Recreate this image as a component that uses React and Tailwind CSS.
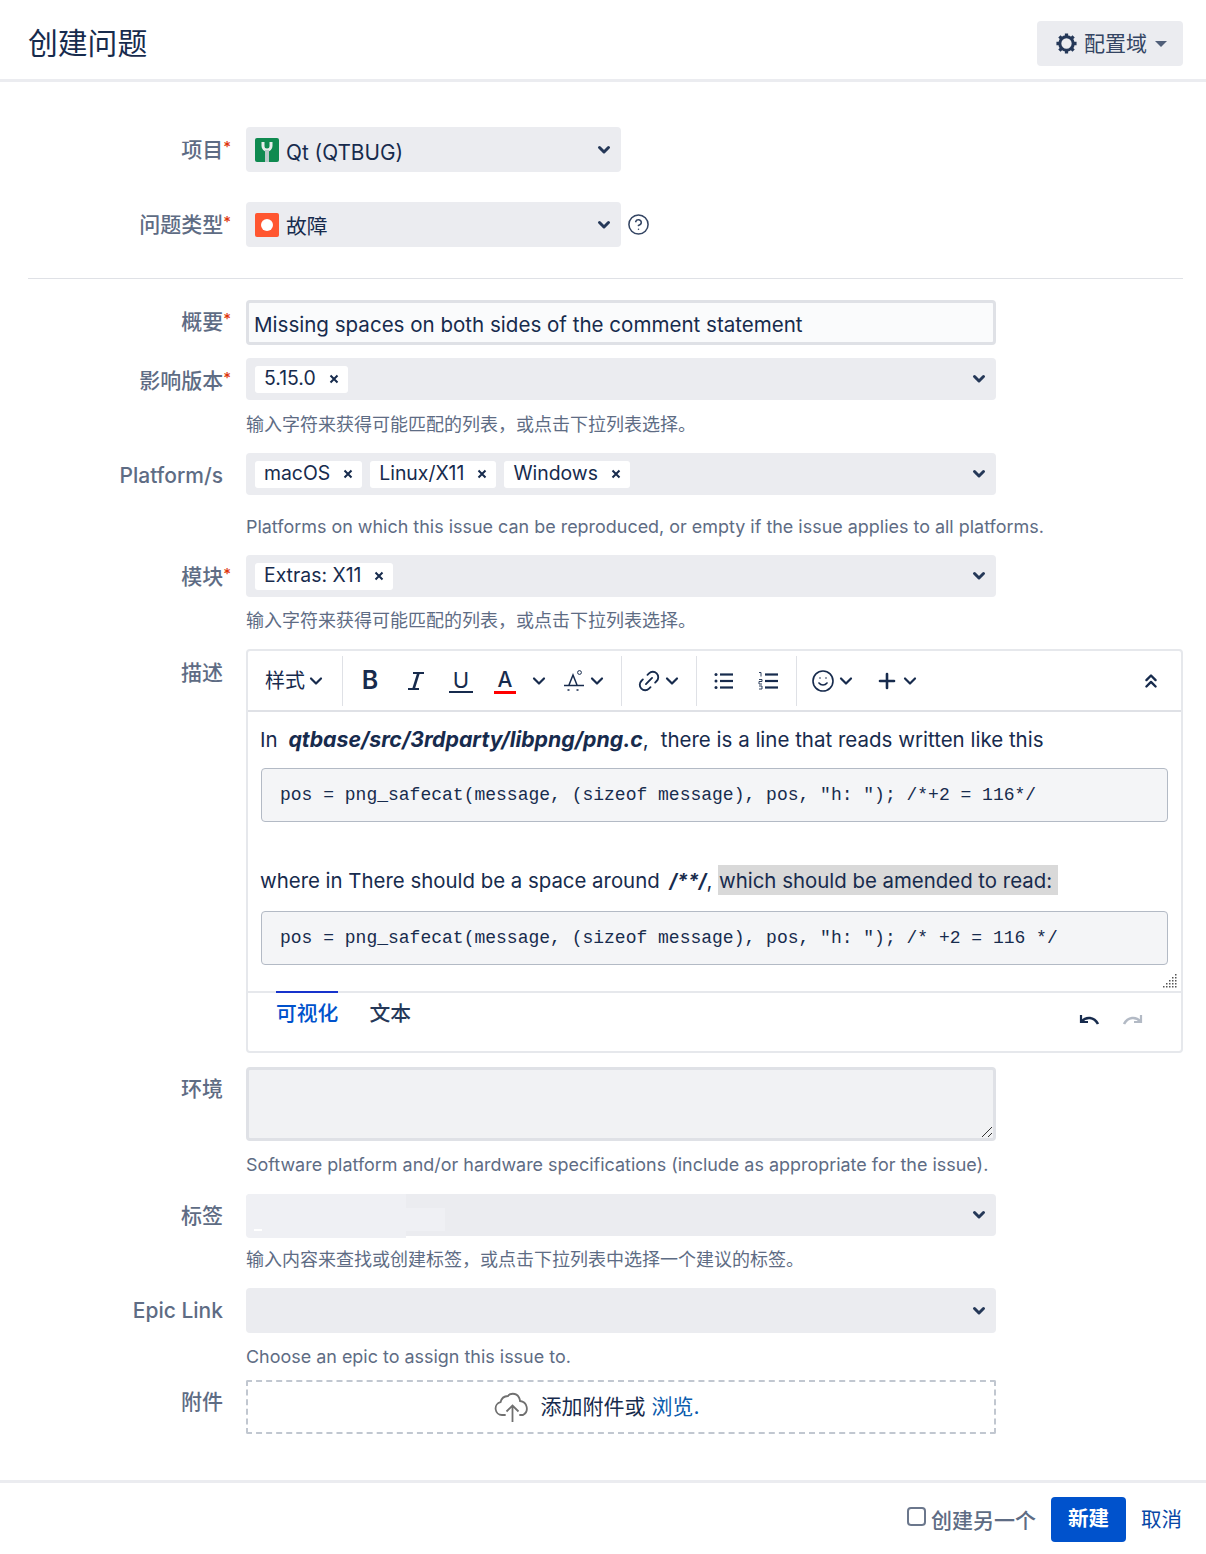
import React from "react";
import { ChevronsUp, Plus, Smile, Link2, HelpCircle } from "lucide-react";

const font = { fontFamily: '"Inter", "Noto Sans CJK SC", sans-serif' };

const Chevron = ({ className = "" }) => (
  <svg width="14" height="10" viewBox="0 0 14 10" fill="none" className={className}>
    <path d="M2.5 2.5 7 7l4.5-4.5" stroke="#253858" strokeWidth="3" strokeLinecap="round" strokeLinejoin="round" />
  </svg>
);

const SmallChevron = ({ className = "" }) => (
  <svg width="14" height="10" viewBox="0 0 14 10" fill="none" className={className}>
    <path d="M2 2.5 7 7.5l5-5" stroke="#172b4d" strokeWidth="2.2" strokeLinecap="round" strokeLinejoin="round" />
  </svg>
);

const Label = ({ text, required, className = "" }) => (
  <div className={`w-[231px] shrink-0 text-right text-[21px] font-medium leading-[28px] text-[#5e6c84] ${className}`}>
    {text}
    {required ? (
      <span className="relative -top-[5px] text-[15px] text-[#de350b]">*</span>
    ) : (
      <span className="inline-block w-2" />
    )}
  </div>
);

const Row = ({ label, required, labelClass, className = "", children }) => (
  <div className={`flex gap-[15px] ${className}`}>
    <Label text={label} required={required} className={labelClass} />
    <div className="min-w-0 flex-1">{children}</div>
  </div>
);

const Help = ({ children, className = "text-[17.96px]" }) => (
  <div className={`leading-[24px] text-[#5e6c84] ${className}`}>{children}</div>
);

const Tag = ({ text }) => (
  <span className="flex h-[27px] items-center rounded-[3px] bg-white pl-[9px] pr-[9px] text-[19.4px] text-[#172b4d]">
    {text}
    <svg width="10" height="10" viewBox="0 0 10 10" className="ml-[13px]">
      <path d="M1.5 1.5l7 7M8.5 1.5l-7 7" stroke="#172b4d" strokeWidth="2" />
    </svg>
  </span>
);

const MultiSelect = ({ tags }) => (
  <div className="flex h-[42px] w-[750px] items-center justify-between rounded-[4px] bg-[#ebecf0] pl-[9px] pr-[10px]">
    <div className="flex gap-2">
      {tags.map((t) => (
        <Tag key={t} text={t} />
      ))}
    </div>
    <Chevron />
  </div>
);

const Divider = ({ className = "" }) => <div className={`mr-[11px] h-[50px] w-px bg-[#dfe1e6] ${className}`} />;

const CodeBlock = ({ children }) => (
  <div className="flex h-[54px] items-center rounded-[4px] border border-[#b3bac5] bg-[#f4f5f7] pl-[18px] text-[18px] text-[#172b4d]" style={{ fontFamily: '"Liberation Mono", monospace' }}>
    <span className="whitespace-pre">{children}</span>
  </div>
);

const Toolbar = () => (
  <div className="flex h-[61px] items-center border-b-2 border-[#dfe1e6] pl-[9px] pr-[19px] text-[#172b4d]">
    <div className="flex w-[85px] items-center pl-[8px] text-[20px]">
      样式
      <SmallChevron className="ml-[4px]" />
    </div>
    <div className="h-[50px] w-px bg-[#dfe1e6]" />
    <div className="flex items-center">
      <span className="ml-[15px] w-[24px] text-center text-[25px] font-semibold leading-none">B</span>
      <svg width="24" height="22" viewBox="0 0 24 22" fill="none" stroke="#172b4d" className="ml-[22px]">
        <path d="M9 3h11M4 19h11" strokeWidth="2" />
        <path d="M14.500 3 9.500 19" strokeWidth="2.6" />
      </svg>
      <span className="ml-[21px] flex w-[24px] flex-col items-center border-b-2 border-[#172b4d] text-[22px] leading-[22px]">U</span>
      <span className="ml-[21px] flex w-[22px] flex-col items-center border-b-[3px] border-[#ff0000] text-[21px] font-medium leading-[23px]">A</span>
      <SmallChevron className="ml-[16px]" />
      <svg width="22" height="24" viewBox="0 0 22 24" className="ml-[17px]" fill="none">
        <path d="M6 16 10 6l4 10M1 16.500h20" stroke="#172b4d" strokeWidth="1.500" />
        <path d="M4.500 21h2M13.500 21h2" stroke="#172b4d" strokeWidth="1.600" />
        <circle cx="16.500" cy="3.500" r="1.900" stroke="#172b4d" strokeWidth="1" />
      </svg>
      <SmallChevron className="ml-[5px]" />
    </div>
    <Divider className="ml-[17px]" />
    <Link2 size={26} strokeWidth={1.7} className="ml-[3px] -rotate-45 text-[#172b4d]" />
    <SmallChevron className="ml-[3px]" />
    <Divider className="ml-[17px]" />
    <svg width="22" height="20" viewBox="0 0 22 20" className="ml-[5px]" fill="#172b4d">
      <circle cx="3" cy="3.500" r="1.500" />
      <circle cx="3" cy="10" r="1.500" />
      <circle cx="3" cy="16.500" r="1.500" />
      <rect x="7" y="2.400" width="13" height="2.200" />
      <rect x="7" y="8.900" width="13" height="2.200" />
      <rect x="7" y="15.400" width="13" height="2.200" />
    </svg>
    <svg width="22" height="20" viewBox="0 0 22 20" className="ml-[23px]" fill="#172b4d">
      <path d="M1 1.500h2v4M1 8.500h3v2H1v2.500h3M1 15h3v3H1" stroke="#172b4d" strokeWidth="0.900" fill="none" />
      <rect x="7" y="2.400" width="13" height="2.200" />
      <rect x="7" y="8.900" width="13" height="2.200" />
      <rect x="7" y="15.400" width="13" height="2.200" />
    </svg>
    <Divider className="ml-[16px]" />
    <Smile size={24} strokeWidth={1.6} className="ml-[3px] text-[#172b4d]" />
    <SmallChevron className="ml-[4px]" />
    <Plus size={24} strokeWidth={2.6} className="ml-[22px] text-[#172b4d]" />
    <SmallChevron className="ml-[4px]" />
    <ChevronsUp size={22} strokeWidth={2.6} className="ml-auto text-[#172b4d]" />
  </div>
);

const Editor = () => (
  <div className="w-[937px] rounded-[4px] border-2 border-[#e6e8ec]">
    <Toolbar />
    <div className="relative h-[279px] px-[13px] text-[20.5px] text-[#172b4d]">
      <div className="-ml-px pt-[13px] leading-[28px]">
        In <b className="ml-[5px] text-[21.3px] font-bold italic">qtbase/src/3rdparty/libpng/png.c</b>,<span className="ml-[12px]">there is a line that reads written like this</span>
      </div>
      <div className="mt-[14px]">
        <CodeBlock>{'pos = png_safecat(message, (sizeof message), pos, "h: "); /*+2 = 116*/'}</CodeBlock>
      </div>
      <div className="-ml-px mt-[45px] text-[20.4px] leading-[28px]">
        where in There should be a space around <b className="ml-[4px] text-[19.5px] font-bold italic">/**/</b>,{" "}
        <span className="bg-[#d9d9d9] pb-[2px] pl-px pr-[6px] pt-[3px]">which should be amended to read:</span>
      </div>
      <div className="mt-[16px]">
        <CodeBlock>{'pos = png_safecat(message, (sizeof message), pos, "h: "); /* +2 = 116 */'}</CodeBlock>
      </div>
      <svg width="14" height="14" viewBox="0 0 14 14" className="absolute bottom-[3px] right-[4px]" fill="#555">
        {[
          [12, 0], [12, 3], [9, 3], [12, 6], [9, 6], [6, 6], [12, 9], [9, 9], [6, 9], [3, 9], [12, 12], [9, 12], [6, 12], [3, 12], [0, 12],
        ].map(([x, y]) => (
          <rect key={`${x}-${y}`} x={x} y={y} width="1.500" height="1.500" />
        ))}
      </svg>
    </div>
    <div className="flex h-[60px] items-start border-t-2 border-[#e6e8ec] pl-[28px] pr-[36px]">
      <div className="-mt-[2px] border-t-2 border-[#1633cc] pt-[7px] text-[20.8px] font-medium leading-[28px] text-[#0052cc]">可视化</div>
      <div className="ml-[31px] pt-[7px] text-[20.8px] font-medium leading-[28px] text-[#253858]">文本</div>
      <div className="ml-auto mt-[20px] flex gap-[20px]">
        <svg width="24" height="16" viewBox="0 0 24 16" fill="none" stroke="#172b4d" strokeWidth="2.600">
          <path d="M4 2v7h7" strokeWidth="2.200" />
          <path d="M4.500 8.500C9 3.500 17 3.500 21 11" />
        </svg>
        <svg width="24" height="16" viewBox="0 0 24 16" fill="none" stroke="#b3bac5" strokeWidth="2.600">
          <path d="M20 2v7h-7" strokeWidth="2.200" />
          <path d="M19.500 8.500C15 3.500 7 3.500 3 11" />
        </svg>
      </div>
    </div>
  </div>
);

export default function App() {
  return (
    <div className="flex h-[1554px] w-[1206px] flex-col overflow-hidden bg-white" style={font}>
      <header className="flex h-[82px] shrink-0 items-start justify-between border-b-[3px] border-[#ebecf0] pl-[28px] pr-[23px]">
        <h1 className="mt-[22px] text-[29.8px] font-normal leading-[42px] text-[#172b4d]">创建问题</h1>
        <button className="mt-[21px] flex h-[45px] w-[146px] items-center rounded-[4px] bg-[#ebecf0] pl-[18px] text-[21px] text-[#344563]">
          <svg width="23" height="23" viewBox="0 0 24 24" fill="none" stroke="#253858">
            <circle cx="12" cy="12" r="7" strokeWidth="3.200" />
            <path d="M12 1.500v4M12 18.500v4M1.500 12h4M18.500 12h4M4.600 4.600l2.800 2.800M16.600 16.600l2.800 2.800M19.400 4.600l-2.800 2.800M7.400 16.600l-2.800 2.800" strokeWidth="3.400" />
          </svg>
          <span className="ml-[6px]">配置域</span>
          <svg width="12" height="6" viewBox="0 0 12 6" className="ml-[8px]" fill="#505f79">
            <path d="M0 0h12L6 6z" />
          </svg>
        </button>
      </header>

      <main className="flex-1 pr-[23px]">
        <Row label="项目" required className="mt-[45px] items-center" labelClass="pt-[2px]">
          <div className="flex h-[45px] w-[375px] items-center rounded-[4px] bg-[#ebecf0] pl-[9px] pr-[10px] text-[20.8px] text-[#172b4d]">
            <svg width="24" height="24" viewBox="0 0 24 24" className="shrink-0 rounded-[2px]">
              <rect width="24" height="24" fill="#0f8a50" />
              <path d="M8 4v4a4 4 0 0 0 8 0V4" stroke="#e6ecea" strokeWidth="3" fill="none" />
              <rect x="10" y="12" width="4" height="12" fill="#b9c9c9" />
            </svg>
            <span className="ml-[7px] flex-1 pt-[6px]">Qt (QTBUG)</span>
            <Chevron />
          </div>
        </Row>
        <Row label="问题类型" required className="mt-[30px] items-center" labelClass="pt-[2px]">
          <div className="flex items-center">
            <div className="flex h-[45px] w-[375px] items-center rounded-[4px] bg-[#ebecf0] pl-[9px] pr-[10px] text-[20.8px] text-[#172b4d]">
              <svg width="24" height="24" viewBox="0 0 24 24" className="shrink-0 rounded-[2px]">
                <rect width="24" height="24" fill="#ff5630" />
                <circle cx="12" cy="12" r="6" fill="#fff" />
              </svg>
              <span className="ml-[7px] flex-1 pt-[4px]">故障</span>
              <Chevron />
            </div>
            <HelpCircle size={23} strokeWidth={1.6} className="ml-[6px] text-[#344563]" />
          </div>
        </Row>

        <div className="ml-[28px] mt-[31px] h-px bg-[#dfe1e6]" />

        <Row label="概要" required className="mt-[21px] items-center" labelClass="pt-px">
          <div className="flex h-[45px] w-[750px] items-center rounded-[4px] border-[3px] border-[#dfe1e6] bg-[#fafbfc] pl-[5px] pt-[6px] text-[20.55px] text-[#172b4d]">
            Missing spaces on both sides of the comment statement
          </div>
        </Row>
        <Row label="影响版本" required className="mt-[13px]" labelClass="pt-[9px]">
          <MultiSelect tags={["5.15.0"]} />
          <Help className="mt-[13px] text-[18px]">输入字符来获得可能匹配的列表，或点击下拉列表选择。</Help>
        </Row>
        <Row label="Platform/s" className="mt-[16px]" labelClass="pt-[9px]">
          <MultiSelect tags={["macOS", "Linux/X11", "Windows"]} />
          <Help className="mt-[20px] text-[17.96px]">Platforms on which this issue can be reproduced, or empty if the issue applies to all platforms.</Help>
        </Row>
        <Row label="模块" required className="mt-[16px]" labelClass="pt-[8px]">
          <MultiSelect tags={["Extras: X11"]} />
          <Help className="mt-[12px] text-[18px]">输入字符来获得可能匹配的列表，或点击下拉列表选择。</Help>
        </Row>
        <Row label="描述" className="mt-[16px]" labelClass="pt-[10px]">
          <Editor />
        </Row>
        <Row label="环境" className="mt-[14px]" labelClass="pt-[8px]">
          <div className="relative h-[74px] w-[750px] rounded-[4px] border-[3px] border-[#dfe1e6] bg-[#f1f2f4]">
            <svg width="12" height="12" viewBox="0 0 12 12" className="absolute bottom-0 right-0" stroke="#333" fill="none">
              <path d="M1 11 11 1M7 11l4-4" />
            </svg>
          </div>
          <Help className="mt-[12px] text-[17.96px]">Software platform and/or hardware specifications (include as appropriate for the issue).</Help>
        </Row>
        <Row label="标签" className="mt-[17px]" labelClass="pt-[8px]">
          <div className="relative h-[42px] w-[750px] rounded-[4px] bg-[#ebecf0]">
            <div className="absolute left-0 top-0 h-[44px] w-[160px] rounded-l-[4px] bg-[#eff0f4]" />
            <div className="absolute left-[160px] top-[14px] h-[23px] w-[39px] bg-[#eff0f4]" />
            <div className="absolute left-[8px] top-[35px] h-[2px] w-[8px] bg-white" />
            <Chevron className="absolute right-[10px] top-[16px]" />
          </div>
          <Help className="mt-[12px] text-[18px]">输入内容来查找或创建标签，或点击下拉列表中选择一个建议的标签。</Help>
        </Row>
        <Row label="Epic Link" className="mt-[16px]" labelClass="pt-[9px]">
          <div className="flex h-[45px] w-[750px] items-center justify-end rounded-[4px] bg-[#ebecf0] pr-[10px]">
            <Chevron />
          </div>
          <Help className="mt-[12px] text-[17.96px]">Choose an epic to assign this issue to.</Help>
        </Row>
        <Row label="附件" className="mt-[11px]" labelClass="pt-[8px]">
          <div className="flex h-[54px] w-[750px] items-center justify-center rounded-[2px] border-2 border-dashed border-[#c1c7d0] pr-[48px] text-[21px] text-[#172b4d]">
            <svg width="37" height="32" viewBox="0 0 37 32" fill="none" stroke="#707070" strokeWidth="1.800" className="mr-[9px]">
              <path d="M11 24H8a6.500 6.500 0 0 1-1.500-12.800A8 8 0 0 1 14 5c1-2.500 8-4 11 1.500 1 2 1 3 1 3.500a7.500 7.500 0 0 1 3 14h-3" strokeLinecap="round" />
              <path d="M18.500 31V15M12.500 20.500l6-6 6 6" />
            </svg>
            添加附件或 <span className="ml-[6px] text-[#0b5cad]">浏览.</span>
          </div>
        </Row>
      </main>

      <footer className="flex h-[74px] shrink-0 items-center justify-end border-t-[3px] border-[#ebecf0] pr-[24px] pt-[2px]">
        <div className="mb-[7px] h-[19px] w-[19px] rounded-[4px] border-2 border-[#6b778c] bg-white" />
        <span className="ml-[5px] pt-[2px] text-[21px] font-medium text-[#5e6c84]">创建另一个</span>
        <button className="ml-[15px] h-[45px] w-[75px] rounded-[4px] bg-[#0052cc] text-[20.5px] font-bold text-white">新建</button>
        <span className="ml-[15px] pt-[2px] text-[20.5px] text-[#0747a6]">取消</span>
      </footer>
    </div>
  );
}
